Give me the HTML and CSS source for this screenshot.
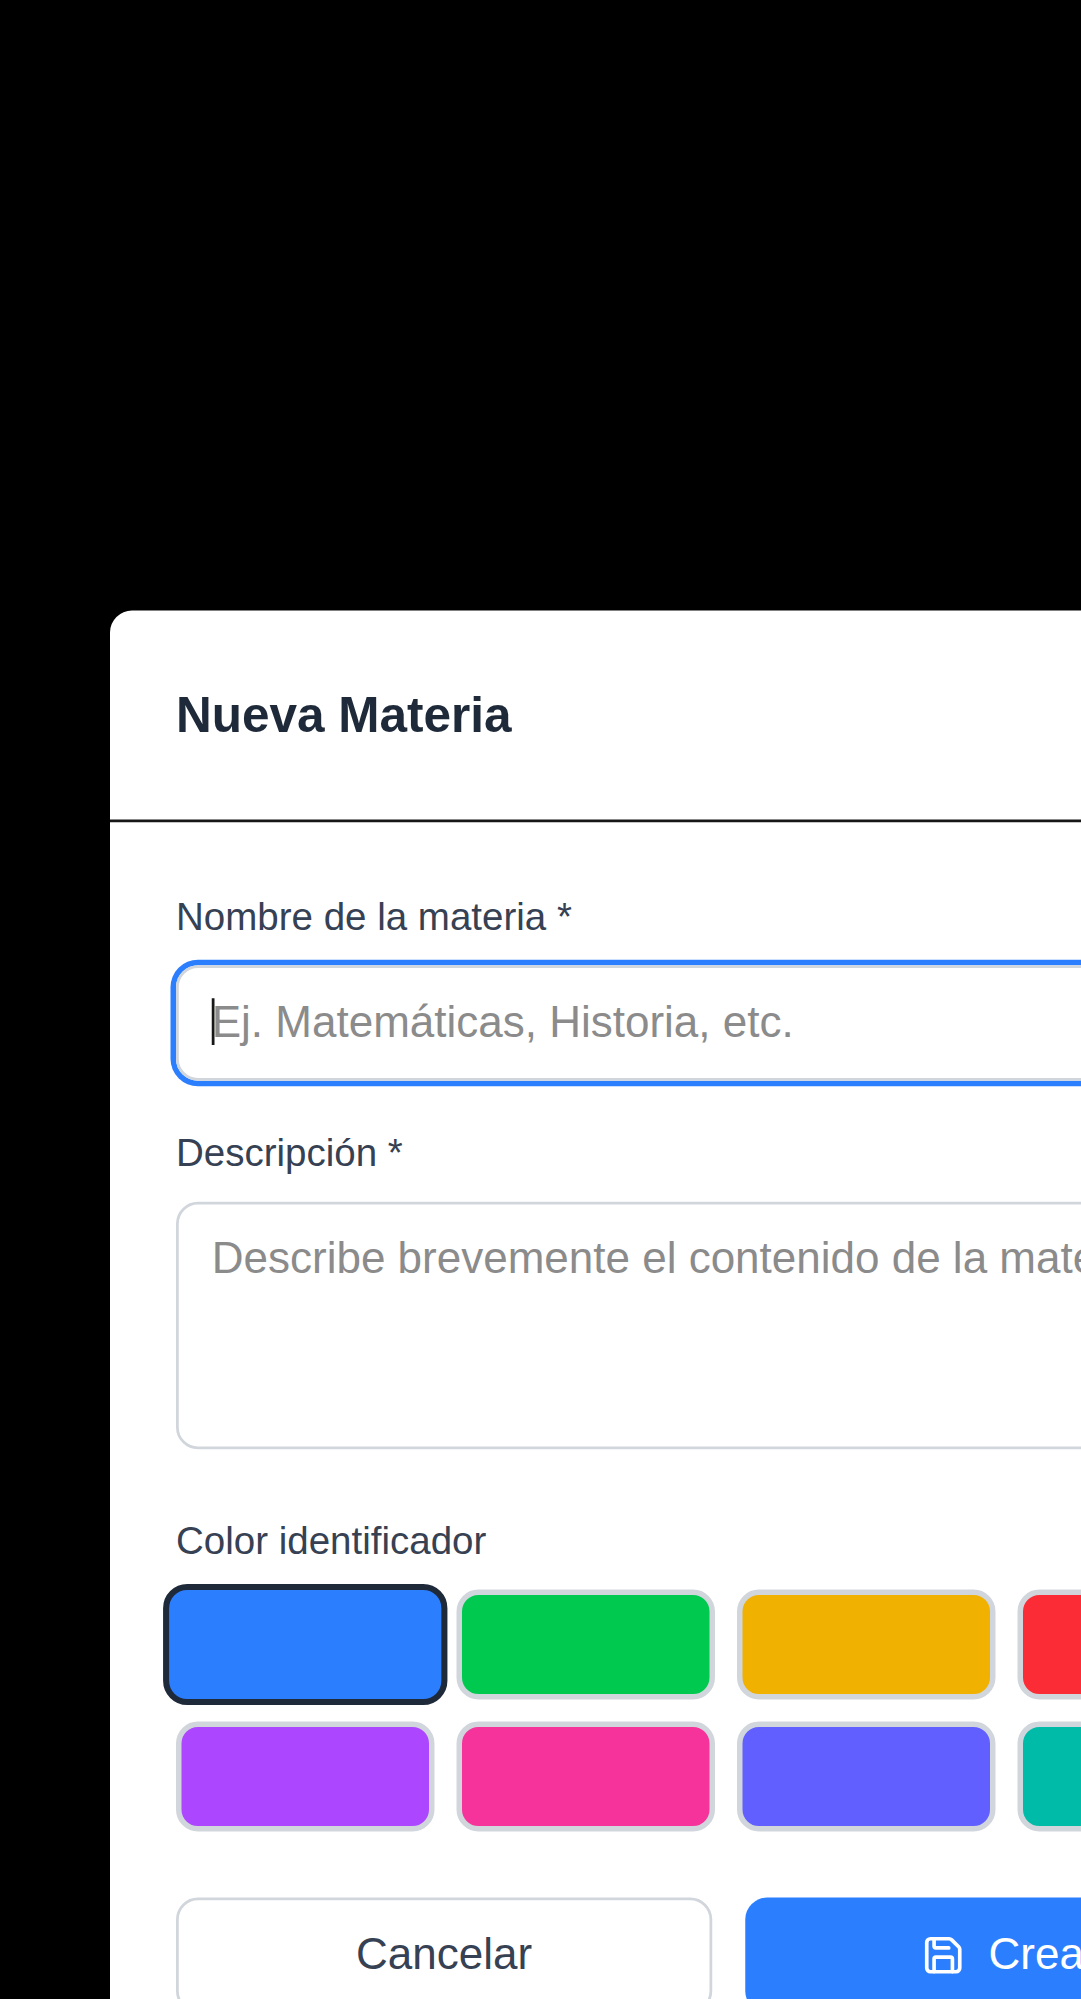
FILE: index.html
```html
<!DOCTYPE html>
<html lang="es">
<head>
<meta charset="utf-8">
<title>Nueva Materia</title>
<link rel="stylesheet" href="styles.css">
</head>
<body>
<div class="overlay">
  <div class="modal">
    <header class="modal-header">
      <h2 class="modal-title">Nueva Materia</h2>
    </header>
    <form class="modal-body">
      <div class="field">
        <label class="label" for="nombre">Nombre de la materia *</label>
        <div class="input-wrap">
          <input class="control control-focused" id="nombre" type="text" placeholder="Ej. Matemáticas, Historia, etc.">
          <span class="caret"></span>
        </div>
      </div>
      <div class="field">
        <label class="label" for="descripcion">Descripción *</label>
        <textarea class="control control-area" id="descripcion" rows="3" placeholder="Describe brevemente el contenido de la materia"></textarea>
      </div>
      <div class="field field-colors">
        <span class="label">Color identificador</span>
        <div class="swatches">
          <button type="button" class="swatch blue selected" aria-label="Azul"></button>
          <button type="button" class="swatch green" aria-label="Verde"></button>
          <button type="button" class="swatch yellow" aria-label="Amarillo"></button>
          <button type="button" class="swatch red" aria-label="Rojo"></button>
          <button type="button" class="swatch purple" aria-label="Morado"></button>
          <button type="button" class="swatch pink" aria-label="Rosa"></button>
          <button type="button" class="swatch indigo" aria-label="Índigo"></button>
          <button type="button" class="swatch teal" aria-label="Turquesa"></button>
        </div>
      </div>
      <div class="actions">
        <button type="button" class="btn btn-cancel">Cancelar</button>
        <button type="button" class="btn btn-create">
          <svg class="icon" viewBox="0 0 24 24" fill="none" stroke="currentColor" stroke-width="2" stroke-linecap="round" stroke-linejoin="round">
            <path d="M15.2 3a2 2 0 0 1 1.4.6l3.8 3.8a2 2 0 0 1 .6 1.4V19a2 2 0 0 1-2 2H5a2 2 0 0 1-2-2V5a2 2 0 0 1 2-2z"/>
            <path d="M17 21v-7a1 1 0 0 0-1-1H8a1 1 0 0 0-1 1v7"/>
            <path d="M7 3v4a1 1 0 0 0 1 1h7"/>
          </svg>
          <span>Crear</span>
        </button>
      </div>
    </form>
  </div>
</div>
</body>
</html>
```

FILE: styles.css
```css
*, *::before, *::after { box-sizing: border-box; }

html, body {
  margin: 0;
  height: 100%;
  overflow: hidden;
  background: #000;
}

body {
  color: #171717;
  font-family: "Liberation Sans", Arial, Helvetica, sans-serif;
  font-size: 16px;
  line-height: 24px;
}

button, input, textarea { font: inherit; color: inherit; margin: 0; }

/* The dialog is laid out in base pixels and magnified 2.75 times. */
.overlay {
  width: 528px;
  padding: 222px 40px 0;
  transform: scale(2.75);
  transform-origin: 0 0;
}

.modal {
  width: 448px;
  background: #fff;
  border-radius: 8px;
}

.modal-header {
  padding: 24px;
  border-bottom: 1px solid #171717;
}

.modal-title {
  margin: 0;
  font-size: 18px;
  line-height: 28px;
  font-weight: 700;
  color: #1e2939;
}

.modal-body { padding: 24px; }

.field { margin-bottom: 16px; }
.field-colors { margin: 23px 0 24px; }

.label {
  display: block;
  margin-bottom: 8px;
  font-size: 14px;
  line-height: 20px;
  color: #364153;
}

.input-wrap { position: relative; }

.control {
  display: block;
  width: 100%;
  height: 42px;
  padding: 8px 12px;
  border: 1px solid #d1d5dc;
  border-radius: 8px;
  background: transparent;
  outline: none;
}
.control::placeholder { color: #8b8b8b; opacity: 1; }
.control-focused { box-shadow: 0 0 0 2px #2b7fff; }
.control-area { height: 90px; resize: none; overflow: hidden; }

.caret {
  position: absolute;
  left: 13px;
  top: 12px;
  width: 1px;
  height: 17px;
  background: #171717;
}

.swatches {
  display: grid;
  grid-template-columns: repeat(4, 1fr);
  gap: 8px;
}

.swatch {
  height: 40px;
  padding: 0;
  border: 2px solid #d1d5dc;
  border-radius: 8px;
}
.swatch.selected { border-color: #1e2939; transform: scale(1.1); }

.blue { background: #2b7fff; }
.green { background: #00c950; }
.yellow { background: #f0b100; }
.red { background: #fb2c36; }
.purple { background: #ad46ff; }
.pink { background: #f6339a; }
.indigo { background: #615fff; }
.teal { background: #00bba7; }

.actions { display: flex; gap: 12px; }

.btn {
  display: flex;
  align-items: center;
  justify-content: center;
  gap: 8px;
  height: 42px;
  padding: 8px 16px;
  border-radius: 8px;
}
.btn-cancel {
  flex: 0 0 195px;
  border: 1px solid #d1d5dc;
  background: transparent;
  color: #364153;
}
.btn-create {
  flex: 0 0 193px;
  border: 0;
  background: #2b7fff;
  color: #fff;
}

.icon { width: 16px; height: 16px; flex: none; }
```
